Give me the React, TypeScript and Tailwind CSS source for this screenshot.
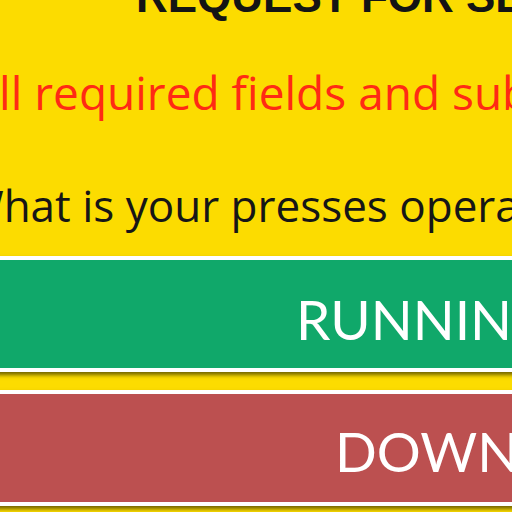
export default function App() {
  return (
    <div className="w-[512px] h-[512px] overflow-hidden bg-[#fcdc00]">
      <div className="w-[900px] -ml-[100px] flex flex-col">
        <h1 className="-mt-[25px] h-[44px] leading-[44px] text-[44px] font-bold text-[#141414] whitespace-nowrap pl-[236px] font-['Liberation_Sans',Arial,sans-serif]">
          REQUEST FOR SERVICE
        </h1>
        <p className="mt-[50px] h-[46px] leading-[46px] text-[46px] text-[#ff2a14] whitespace-nowrap pl-[70px] font-['Open_Sans','Noto_Sans',sans-serif]">
          All required fields and submit
        </p>
        <p className="mt-[68px] h-[44px] leading-[44px] text-[44px] text-[#161616] whitespace-nowrap pl-[63px] font-['Open_Sans','Noto_Sans',sans-serif]">
          What is your presses operating status?
        </p>
        <button className="mt-[29px] h-[116px] border-4 border-white bg-[#10a86a] shadow-[0_3px_4px_rgba(0,0,0,0.55)] flex items-center text-white text-[55px] whitespace-nowrap pl-[392px] pt-[10px] font-['Lato','Noto_Sans',sans-serif]">
          RUNNING
        </button>
        <button className="mt-[18px] h-[116px] border-4 border-white bg-[#bc5050] shadow-[0_3px_4px_rgba(0,0,0,0.55)] flex items-center text-white text-[55px] whitespace-nowrap pl-[431px] pt-[6px] font-['Lato','Noto_Sans',sans-serif]">
          DOWN
        </button>
      </div>
    </div>
  );
}
